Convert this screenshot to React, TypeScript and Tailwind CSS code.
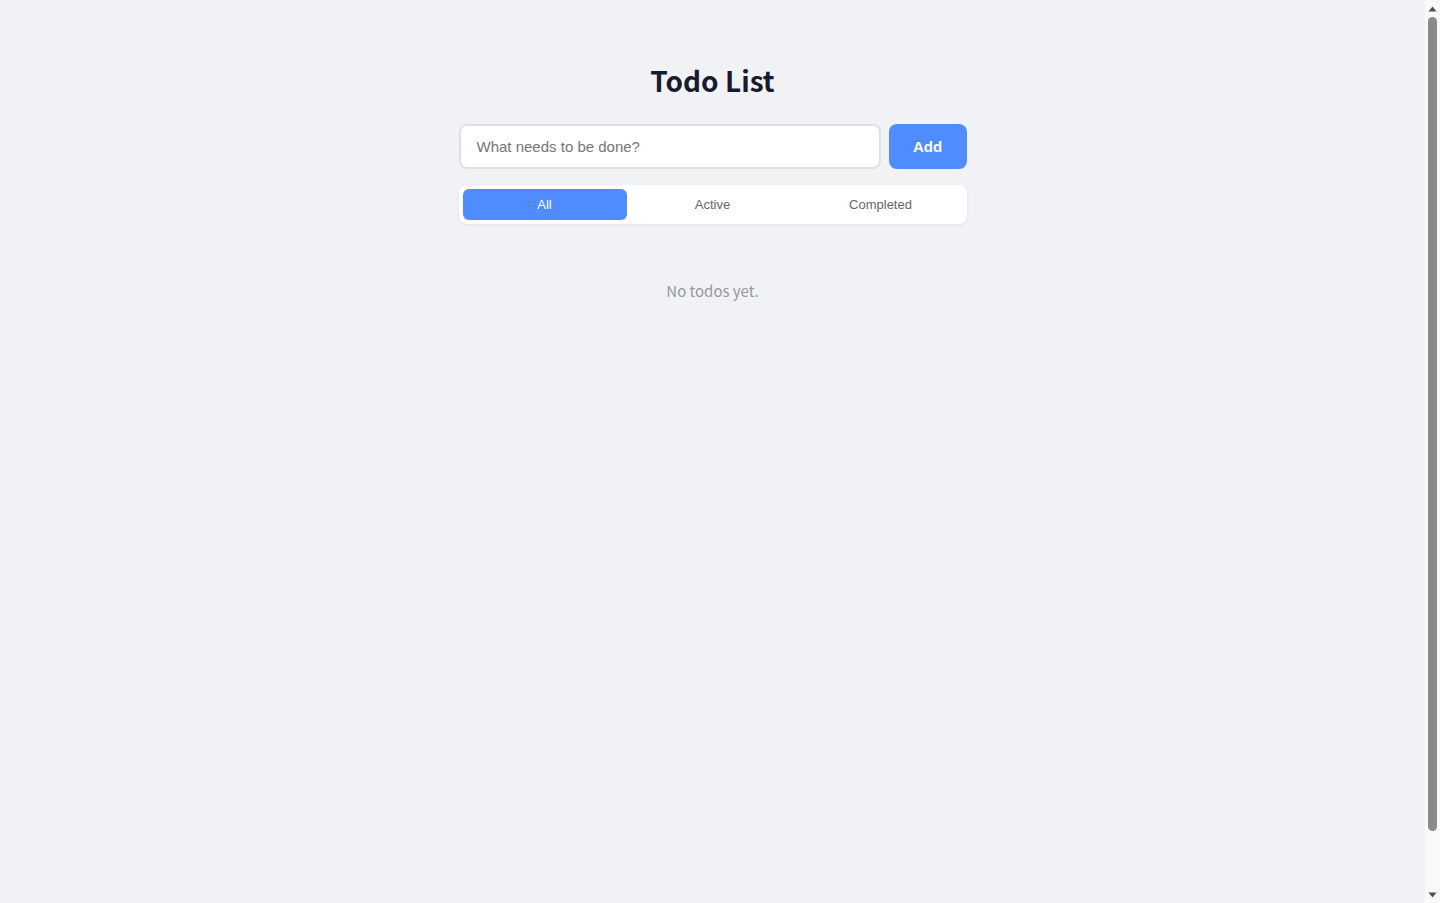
import React, { useState } from "react";

function Scrollbar() {
  return (
    <div className="w-[15px] h-screen shrink-0 bg-[#f9f9f9] flex flex-col items-center">
      <div className="h-[17px] w-full flex items-center justify-center">
        <svg width="9" height="6" viewBox="0 0 9 6">
          <polygon points="4.5,0.5 8.5,5.5 0.5,5.5" fill="#505050" />
        </svg>
      </div>
      <div className="flex-1 w-full px-[3px] pb-[55px]">
        <div className="h-full w-full rounded-full bg-[#8a8a8a]" />
      </div>
      <div className="h-[17px] w-full flex items-center justify-center">
        <svg width="9" height="6" viewBox="0 0 9 6">
          <polygon points="0.5,0.5 8.5,0.5 4.5,5.5" fill="#505050" />
        </svg>
      </div>
    </div>
  );
}

export default function App() {
  const [filter, setFilter] = useState<"all" | "active" | "completed">("all");
  const [text, setText] = useState("");
  const tabs: { key: "all" | "active" | "completed"; label: string }[] = [
    { key: "all", label: "All" },
    { key: "active", label: "Active" },
    { key: "completed", label: "Completed" },
  ];
  return (
    <div
      className="flex h-screen bg-[#f0f2f5] overflow-hidden"
      style={{ fontFamily: '"Noto Sans CJK SC", "Noto Sans", sans-serif' }}
    >
      <div className="flex-1 pt-[61px]">
        <div className="mx-auto w-[508px]">
          <h1 className="text-center text-[28px] leading-[38px] font-bold text-[#1a1a2e] mb-[25px]">
            Todo List
          </h1>
          <div className="flex gap-2">
            <input
              value={text}
              onChange={(e) => setText(e.target.value)}
              placeholder="What needs to be done?"
              className="flex-1 h-[45px] rounded-lg border-2 border-[#e0e0e0] bg-white px-4 text-[15px] text-[#333] placeholder:text-[#757575] outline-none"
              style={{ fontFamily: '"Liberation Sans", Arial, sans-serif' }}
            />
            <button
              className="w-[78px] h-[45px] pt-[2px] rounded-lg bg-[#4f8cff] text-white text-[15px] font-bold"
              style={{ fontFamily: '"Liberation Sans", Arial, sans-serif' }}
            >
              Add
            </button>
          </div>
          <div className="mt-4 flex gap-1 rounded-lg bg-white p-1 shadow-[0_1px_3px_rgba(0,0,0,0.08)]">
            {tabs.map((t) => (
              <button
                key={t.key}
                onClick={() => setFilter(t.key)}
                className={
                  filter === t.key
                    ? "flex-1 h-[31px] rounded-md bg-[#4f8cff] text-white text-[13px]"
                    : "flex-1 h-[31px] rounded-md bg-transparent text-[#666] text-[13px]"
                }
                style={{ fontFamily: '"Liberation Sans", Arial, sans-serif' }}
              >
                {t.label}
              </button>
            ))}
          </div>
          <p className="mt-[55px] text-center text-[15px] leading-6 text-[#999]">No todos yet.</p>
        </div>
      </div>
      <Scrollbar />
    </div>
  );
}
